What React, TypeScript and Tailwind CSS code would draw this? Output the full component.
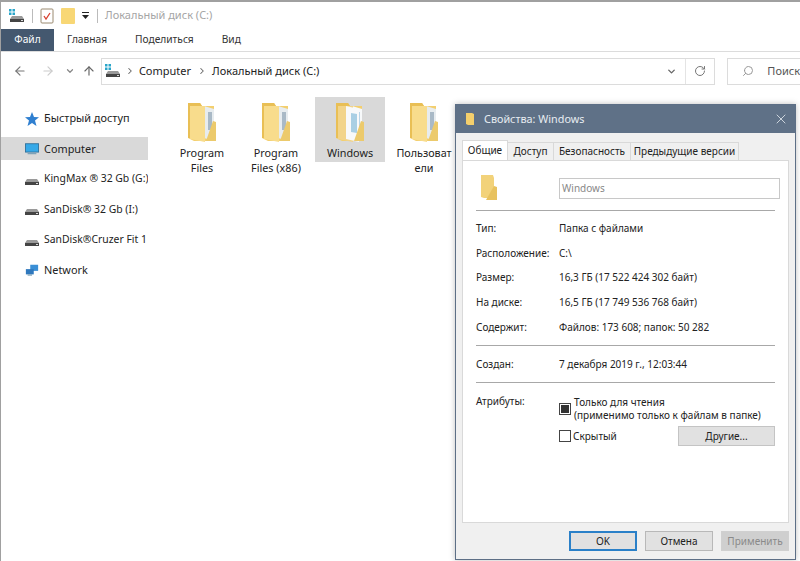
import { ArrowLeft, ArrowRight, ArrowUp, ChevronDown, ChevronRight, RotateCw, Search, X } from "lucide-react";

const font = "font-['Noto_Sans',sans-serif]";

function DriveIcon({ grid = false }: { grid?: boolean }) {
  return (
    <svg width="16" height="14" viewBox="0 0 16 14" className="shrink-0">
      {grid && (
        <g fill="#2aa5c9">
          <rect x="0" y="0" width="2.5" height="2.5" />
          <rect x="3.5" y="0" width="2.5" height="2.5" />
          <rect x="0" y="3.5" width="2.5" height="2.5" />
          <rect x="3.5" y="3.5" width="2.5" height="2.5" />
        </g>
      )}
      <path d="M3 7h10l2 3v3H1v-3z" fill="#9a9a9a" />
      <rect x="1" y="10" width="14" height="3" fill="#444" />
      <rect x="12" y="11" width="2" height="1" fill="#ddd" />
    </svg>
  );
}

function FolderIcon({ light = false }: { light?: boolean }) {
  return (
    <svg width="32" height="44" viewBox="0 0 32 44">
      <path d="M2 3h12l2 3h12v35H8l-6-3z" fill="#f3cf6f" />
      <path d="M2 3h12l2 3H8v32l-6 0z" fill="#e9bf55" />
      <path d="M18 6l10 3v32l-10-3z" fill={light ? "#f7f9fa" : "#e7ecef"} />
      <path d="M22 12h4v18h-4z" fill={light ? "#9fc6de" : "#8fa4b5"} opacity="0.7" />
      <path d="M4 6h15v36l-15-3z" fill={light ? "#f2d48a" : "#f8dc8c"} />
      {light && <path d="M12 6l13 3v33l-13-3z" fill="#f8f9fa" />}
      {light && <path d="M17 13l6 1v19l-6-1z" fill="#a9cfe4" />}
      <path d="M27 21l3 1v19H20z" fill="#ecca6c" />
    </svg>
  );
}

function FolderTile({ lines, selected, light }: { lines: string[]; selected?: boolean; light?: boolean }) {
  return (
    <div className={`flex w-[70px] shrink-0 flex-col items-center pt-[3px] ${selected ? "h-[65px] bg-[#d9d9d9]" : "h-[80px]"}`}>
      <FolderIcon light={light} />
      <div className="mt-[1px] text-center text-[10.8px] leading-[15px] whitespace-nowrap text-[#222]">
        {lines.map((l) => (
          <div key={l}>{l}</div>
        ))}
      </div>
    </div>
  );
}

function NavItem({ icon, label, active, small }: { icon: React.ReactNode; label: string; active?: boolean; small?: boolean }) {
  return (
    <div className={`flex h-[23px] items-center gap-[5px] overflow-hidden pl-[24px] whitespace-nowrap text-[#222] ${small ? "text-[10.4px]" : "text-[10.9px]"} ${active ? "bg-[#d9d9d9]" : ""}`}>
      <span className="flex w-[14px] shrink-0 justify-center">{icon}</span>
      {label}
    </div>
  );
}

function PropRow({ label, value }: { label: string; value: string }) {
  return (
    <div className="flex h-[24.6px] items-center text-[10px] text-[#222]">
      <span className="w-[83px]">{label}</span>
      <span>{value}</span>
    </div>
  );
}

function DlgButton({ label, className }: { label: string; className: string }) {
  return (
    <div className={`flex h-[20px] items-center justify-center text-[10px] ${className}`}>{label}</div>
  );
}

export default function App() {
  return (
    <div className={`relative h-[561px] w-[800px] overflow-hidden border-t-2 border-l border-[#a0a0a0] bg-white ${font}`}>
      {/* title row */}
      <div className="flex h-[27px] items-center gap-[7px] pl-[8px]">
        <DriveIcon grid />
        <div className="h-[14px] w-px bg-[#bbb]" />
        <svg width="14" height="17" viewBox="0 0 14 17">
          <rect x="1" y="2" width="12" height="14" rx="1" fill="#fff" stroke="#9a8a70" />
          <path d="M4 9l2 3 4-6" fill="none" stroke="#d8412f" strokeWidth="1.3" />
        </svg>
        <div className="h-[16px] w-[14px] rounded-[1px] bg-[#f8d775]" />
        <svg width="9" height="8" viewBox="0 0 9 8" className="-ml-[1px]">
          <rect x="1" y="0" width="7" height="1" fill="#222" />
          <path d="M1 3h7L4.5 7z" fill="#222" />
        </svg>
        <div className="h-[14px] w-px bg-[#bbb]" />
        <span className="text-[11px] text-[#a5a5a5]">Локальный диск (C:)</span>
      </div>
      {/* ribbon tabs */}
      <div className="flex h-[23px] items-center border-b border-[#dcdcdc] text-[10.2px] text-[#333]">
        <div className="flex h-[22px] w-[53px] items-center justify-center bg-[#44586f] text-white">Файл</div>
        <span className="ml-[13px]">Главная</span>
        <span className="ml-[28px]">Поделиться</span>
        <span className="ml-[28px]">Вид</span>
      </div>
      {/* address row */}
      <div className="flex h-[38px] items-center pl-[12px]">
        <ArrowLeft size={14} className="text-[#777]" />
        <ArrowRight size={14} className="ml-[14px] text-[#ccc]" />
        <ChevronDown size={10} strokeWidth={3} className="ml-[10px] text-[#888]" />
        <ArrowUp size={14} className="ml-[7px] text-[#666]" />
        <div className="ml-[5px] flex h-[27px] w-[616px] items-center border border-[#dcdcdc] pl-[3px] text-[11px] text-[#222]">
          <DriveIcon grid />
          <ChevronRight size={10} strokeWidth={2.5} className="mx-[4px] text-[#666]" />
          <span>Computer</span>
          <ChevronRight size={10} strokeWidth={2.5} className="mx-[5.5px] text-[#666]" />
          <span>Локальный диск (C:)</span>
          <ChevronDown size={11} strokeWidth={3} className="mr-[8px] ml-auto text-[#666]" />
          <div className="flex h-full w-[29px] items-center justify-center border-l border-[#e4e4e4]">
            <RotateCw size={12} className="text-[#777]" />
          </div>
        </div>
        <div className="ml-[12px] flex h-[27px] flex-1 items-center gap-[13px] border border-r-0 border-[#dcdcdc] pl-[14px] text-[11px] text-[#555]">
          <Search size={12} className="-scale-x-100 text-[#999]" />
          <span>Поиск</span>
        </div>
      </div>
      {/* body */}
      <div className="flex">
        <div className="w-[147px] shrink-0 pt-[17px]">
          <div className="flex flex-col gap-[7.3px]">
            <NavItem
              label="Быстрый доступ"
              icon={
                <svg width="14" height="14" viewBox="0 0 14 14">
                  <path d="M7 0l2 5 5 .3-4 3.2L11.5 14 7 11l-4.5 3L4 8.5 0 5.3 5 5z" fill="#2f7fd0" />
                </svg>
              }
            />
            <NavItem
              active
              label="Computer"
              icon={
                <svg width="16" height="14" viewBox="0 0 16 14">
                  <rect x="0.5" y="1" width="15" height="9.5" fill="#36a9e8" stroke="#2f6f98" />
                  <rect x="3" y="11.5" width="10" height="1.5" fill="#7fa3b8" />
                </svg>
              }
            />
            <NavItem small label="KingMax ® 32 Gb (G:)" icon={<DriveIcon />} />
            <NavItem small label="SanDisk® 32 Gb (I:)" icon={<DriveIcon />} />
            <NavItem small label="SanDisk®Cruzer Fit 1" icon={<DriveIcon />} />
            <NavItem
              label="Network"
              icon={
                <svg width="16" height="14" viewBox="0 0 16 14">
                  <rect x="6" y="1" width="9" height="7" fill="#3a8fd6" />
                  <rect x="1" y="6" width="9" height="6" fill="#2f78bd" />
                  <rect x="3" y="12" width="5" height="1.5" fill="#7fa3b8" />
                </svg>
              }
            />
          </div>
        </div>
        <div className="flex flex-1 gap-[4px] pt-[7px] pl-[19px]">
          <FolderTile lines={["Program", "Files"]} />
          <FolderTile lines={["Program", "Files (x86)"]} />
          <FolderTile lines={["Windows"]} selected light />
          <FolderTile lines={["Пользоват", "ели"]} />
        </div>
      </div>

      {/* properties window */}
      <div className="absolute top-[102px] left-[454px] flex h-[456px] w-[341px] flex-col border border-[#5d6f86] bg-[#f0f0f0] shadow-[0_0_6px_rgba(0,0,0,0.25)]">
        <div className="flex h-[28px] shrink-0 items-center bg-[#5f7187] pr-[6px] pl-[10px] text-[10.8px] text-[#e8edf2]">
          <svg width="10" height="14" viewBox="0 0 10 14">
            <path d="M0 1h6l2 1v11H2l-2-1z" fill="#f4cf6c" />
          </svg>
          <span className="ml-[8px]">Свойства: Windows</span>
          <X size={16} strokeWidth={1.2} className="ml-auto text-[#e8edf2]" />
        </div>
        <div className="flex flex-1 flex-col px-[6px] pt-[8px]">
          <div className="relative z-10 flex h-[19px] items-end text-[10px] whitespace-nowrap text-[#222]">
            <div className="flex h-[20px] w-[46px] items-center justify-center border border-b-0 border-[#d9d9d9] bg-white">Общие</div>
            <div className="flex h-[18px] w-[46px] items-center justify-center border-t border-r border-[#d9d9d9]">Доступ</div>
            <div className="flex h-[18px] w-[77px] items-center justify-center border-t border-r border-[#d9d9d9]">Безопасность</div>
            <div className="flex h-[18px] w-[108px] items-center justify-center border-t border-r border-[#d9d9d9]">Предыдущие версии</div>
          </div>
          <div className="flex h-[363px] flex-col border border-[#d9d9d9] bg-white px-[13px]">
            <div className="flex h-[49px] shrink-0 items-center pt-[5px]">
              <div className="ml-[4px] flex w-[79px] shrink-0 items-center">
                <svg width="18" height="26" viewBox="0 0 18 26">
                  <path d="M1 0h12l1 3v20H4l-3-1z" fill="#f2d27a" />
                  <path d="M14 11l3 1v13H6z" fill="#e8c25f" />
                </svg>
              </div>
              <div className="flex h-[21px] w-[221px] shrink-0 items-center border border-[#c8c8c8] pl-[2px] text-[10px] text-[#888]">Windows</div>
            </div>
            <div className="h-px bg-[#a8a8a8]" />
            <div className="pt-[5.5px]">
              <PropRow label="Тип:" value="Папка с файлами" />
              <PropRow label="Расположение:" value="C:\" />
              <PropRow label="Размер:" value="16,3 ГБ (17 522 424 302 байт)" />
              <PropRow label="На диске:" value="16,5 ГБ (17 749 536 768 байт)" />
              <PropRow label="Содержит:" value="Файлов: 173 608; папок: 50 282" />
            </div>
            <div className="mt-[6px] h-px bg-[#a8a8a8]" />
            <div className="flex h-[36px] items-center text-[10px] text-[#222]">
              <span className="w-[83px]">Создан:</span>
              <span>7 декабря 2019 г., 12:03:44</span>
            </div>
            <div className="h-px bg-[#a8a8a8]" />
            <div className="flex pt-[12px] text-[10px] leading-[13px] text-[#222]">
              <span className="w-[83px]">Атрибуты:</span>
              <div className="flex-1">
                <div className="mt-[1px] flex items-center gap-[3px]">
                  <div className="flex h-[12px] w-[12px] items-center justify-center border border-[#444]">
                    <div className="h-[8px] w-[8px] bg-[#333]" />
                  </div>
                  <div>
                    <div>Только для чтения</div>
                    <div>(применимо только к файлам в папке)</div>
                  </div>
                </div>
                <div className="mt-[4px] flex items-center gap-[2px]">
                  <div className="h-[12px] w-[12px] border border-[#444]" />
                  <span>Скрытый</span>
                  <div className="mr-0 ml-auto flex h-[20px] w-[97px] items-center justify-center border border-[#c4c4c4] bg-[#e1e1e1] text-[10px]">Другие...</div>
                </div>
              </div>
            </div>
          </div>
          <div className="mt-[8px] flex justify-end gap-[8px]">
            <DlgButton label="OK" className="w-[68px] border-2 border-[#2a80c8] bg-[#e1e1e1] text-[#222]" />
            <DlgButton label="Отмена" className="w-[68px] border border-[#b8b8b8] bg-[#e1e1e1] text-[#222]" />
            <DlgButton label="Применить" className="w-[68px] border border-[#d0d0d0] bg-[#cfcfcf] text-[#8a8a8a]" />
          </div>
        </div>
      </div>
    </div>
  );
}
